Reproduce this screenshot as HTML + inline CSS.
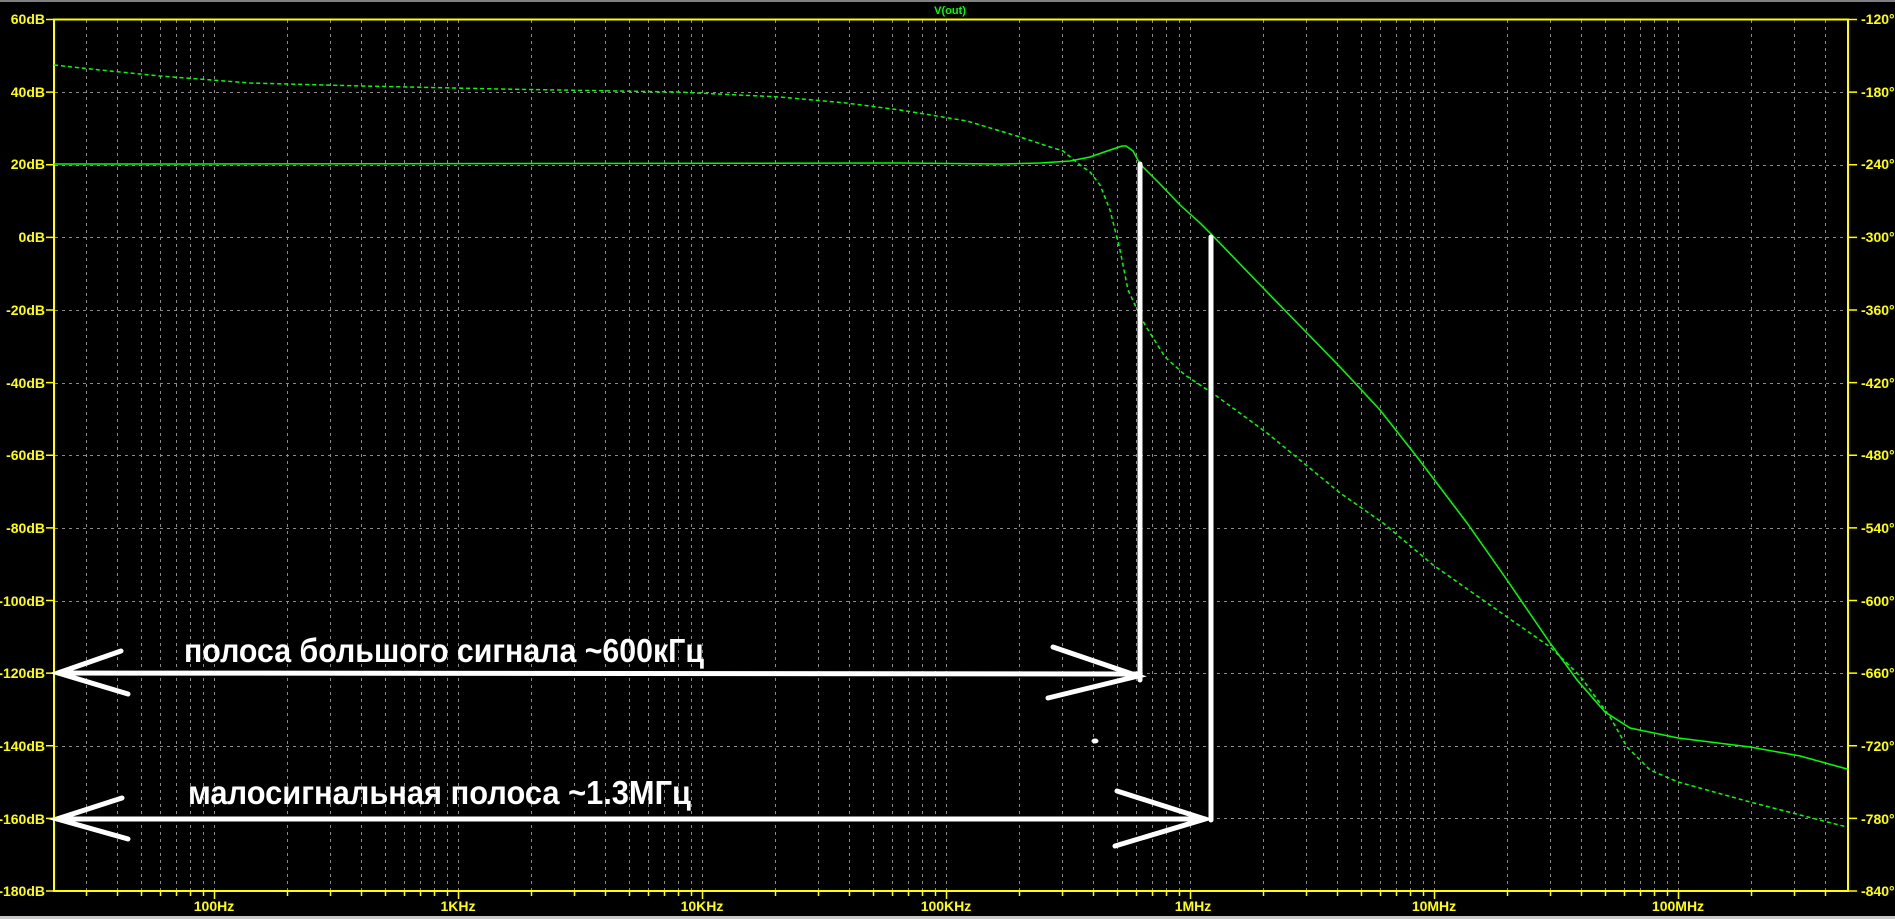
<!DOCTYPE html>
<html><head><meta charset="utf-8"><style>
html,body{margin:0;padding:0;background:#000;width:1895px;height:919px;overflow:hidden}
svg{display:block}
.l{font-family:"Liberation Sans",sans-serif;font-weight:bold;font-size:14px;fill:#ffff00}
.a{font-family:"Liberation Sans","Noto Sans CJK SC",sans-serif;font-weight:bold;font-size:33px;fill:#fff}
</style></head><body>
<svg id="s" width="1895" height="919" viewBox="0 0 1895 919" xmlns="http://www.w3.org/2000/svg">
<rect x="0" y="0" width="1895" height="919" fill="#000"/>
<rect x="0" y="0" width="1895" height="2" fill="#808080"/>
<rect x="0" y="916" width="1895" height="3" fill="#c8c8c8"/>
<g id="grid" stroke="#8a8a8a" stroke-width="1" stroke-dasharray="3,4"></g>
<g id="ticks" stroke="#ffff00" stroke-width="1.5"></g>
<rect x="54" y="19.5" width="1794" height="871.5" fill="none" stroke="#ffff00" stroke-width="2"/>
<text x="950" y="14" text-anchor="middle" font-family="Liberation Sans,sans-serif" font-weight="bold" font-size="11" fill="#00ff00">V(out)</text>
<g class="l" text-anchor="end">
<text x="45" y="24">60dB</text><text x="45" y="97">40dB</text><text x="45" y="169">20dB</text><text x="45" y="242">0dB</text>
<text x="45" y="315">-20dB</text><text x="45" y="388">-40dB</text><text x="45" y="460">-60dB</text><text x="45" y="533">-80dB</text>
<text x="45" y="606">-100dB</text><text x="45" y="678">-120dB</text><text x="45" y="751">-140dB</text><text x="45" y="824">-160dB</text><text x="45" y="896">-180dB</text>
</g>
<g class="l">
<text x="1861" y="24">-120°</text><text x="1861" y="97">-180°</text><text x="1861" y="169">-240°</text><text x="1861" y="242">-300°</text>
<text x="1861" y="315">-360°</text><text x="1861" y="388">-420°</text><text x="1861" y="460">-480°</text><text x="1861" y="533">-540°</text>
<text x="1861" y="606">-600°</text><text x="1861" y="678">-660°</text><text x="1861" y="751">-720°</text><text x="1861" y="824">-780°</text><text x="1861" y="896">-840°</text>
</g>
<g class="l" text-anchor="middle">
<text x="214" y="911">100Hz</text><text x="458" y="911">1KHz</text><text x="702" y="911">10KHz</text><text x="946" y="911">100KHz</text>
<text x="1193" y="911">1MHz</text><text x="1434" y="911">10MHz</text><text x="1678" y="911">100MHz</text>
</g>
<polyline fill="none" stroke="#00ff00" stroke-width="1.5" stroke-dasharray="4,3" points="54,65 100,70 160,76 250,83 363,86 500,89 677,92 780,97 846,103 900,110 967,121 1020,137 1050,147 1063,151 1080,165 1090,172 1100,185 1110,210 1115,230 1120,250 1128,290 1135,305 1145,325 1165,357 1185,375 1203,387 1215,395 1267,433 1340,493 1383,523 1433,565 1507,617 1550,647 1577,673 1583,680 1610,717 1627,747 1650,770 1678,782 1750,802 1800,815 1847,827"/>
<polyline fill="none" stroke="#00ff00" stroke-width="1.5" points="54,164 200,164 900,163 1000,164 1040,163 1070,161 1090,157 1110,150 1122,146 1126,146 1133,151 1140,164 1160,184 1180,205 1200,223 1211,234 1267,292 1340,367 1380,410 1417,457 1467,523 1507,580 1550,643 1577,680 1605,712 1630,728 1678,738 1750,747 1800,756 1847,769"/>
<g stroke="#fff" stroke-width="5" stroke-linecap="round" fill="none">
<line x1="1140" y1="164" x2="1140" y2="680"/>
<line x1="1211" y1="237" x2="1211" y2="820"/>
<line x1="58" y1="673" x2="1140" y2="674"/>
<polyline points="121,651 58,673 128,694"/>
<polyline points="1053,647 1138,676 1048,698"/>
<line x1="57" y1="819" x2="1205" y2="819"/>
<polyline points="122,798 57,819 128,839"/>
<polyline points="1117,791 1205,819 1115,846"/>
</g>
<ellipse cx="1095" cy="741" rx="3.5" ry="2.5" fill="#fff"/>
<text class="a" x="184" y="662" textLength="520" lengthAdjust="spacingAndGlyphs">полоса большого сигнала ~600кГц</text>
<text class="a" x="188" y="804" textLength="503" lengthAdjust="spacingAndGlyphs">малосигнальная полоса ~1.3МГц</text>
</svg>
<script>
(function(){
var ns="http://www.w3.org/2000/svg",g=document.getElementById('grid'),t=document.getElementById('ticks');
function ln(p,x1,y1,x2,y2){var e=document.createElementNS(ns,'line');e.setAttribute('x1',x1);e.setAttribute('y1',y1);e.setAttribute('x2',x2);e.setAttribute('y2',y2);p.appendChild(e);}
for(var d=1;d<=8;d++)for(var k=1;k<=9;k++){var x=214+244*(Math.log10(k)+d-2);if(x>55&&x<1847){x=Math.round(x)+0.5;ln(g,x,20,x,890);ln(t,x,891,x,k==1?899:896);}}
for(var i=1;i<12;i++){var y=Math.round(19.5+i*72.625)+0.5;ln(g,55,y,1847,y);}
for(var i=0;i<=12;i++){var y=19.5+i*72.625;ln(t,46,y,54,y);ln(t,1848,y,1857,y);}
})();
</script>
</body></html>
